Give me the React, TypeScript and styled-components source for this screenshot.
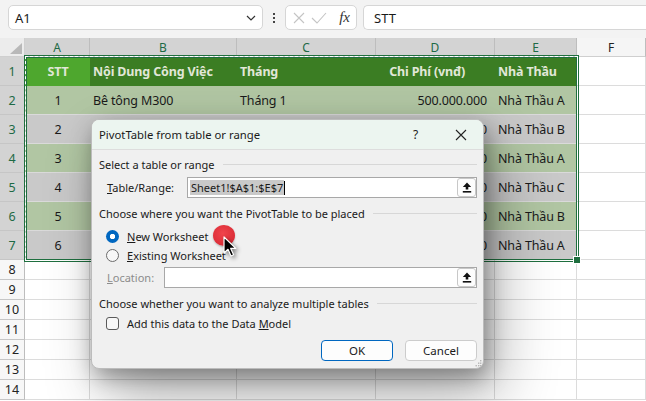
import React from "react";
import styled, { createGlobalStyle, css } from "styled-components";

const GlobalStyle = createGlobalStyle`
  html, body {
    margin: 0;
    padding: 0;
    background: #ffffff;
  }
  body {
    font-family: "Noto Sans", "Open Sans", sans-serif;
    color: #1a1a1a;
  }
`;

type Tone = "head" | "headActive" | "green" | "gray";

interface RowData {
  stt: number;
  content: string;
  month: string;
  cost: string;
  contractor: string;
}

// rows 3-7 sit under the dialog, only the edge of the cost column peeks out
const rows: RowData[] = [
  { stt: 1, content: "Bê tông M300", month: "Tháng 1", cost: "500.000.000", contractor: "Nhà Thầu A" },
  { stt: 2, content: "", month: "", cost: "320.000.000", contractor: "Nhà Thầu B" },
  { stt: 3, content: "", month: "", cost: "150.000.000", contractor: "Nhà Thầu A" },
  { stt: 4, content: "", month: "", cost: "80.000.000", contractor: "Nhà Thầu C" },
  { stt: 5, content: "", month: "", cost: "120.000.000", contractor: "Nhà Thầu B" },
  { stt: 6, content: "", month: "", cost: "90.000.000", contractor: "Nhà Thầu A" },
];

const columns = ["A", "B", "C", "D", "E", "F"];
const emptyRows = [8, 9, 10, 11, 12, 13, 14];

const UploadIcon = () => (
  <svg width="10" height="11" viewBox="0 0 10 11">
    <path d="M5 0.5 L9.2 5 L6.3 5 L6.3 7.6 L3.7 7.6 L3.7 5 L0.8 5 Z" fill="#111" />
    <rect x="0.8" y="9" width="8.4" height="1.6" fill="#111" />
  </svg>
);

const App: React.FC = () => {
  return (
    <>
      <GlobalStyle />
      <Page>
        <FormulaBar>
          <NameBox>
            <span>A1</span>
            <svg width="10" height="6" viewBox="0 0 10 6">
              <path d="M1 1 L5 5 L9 1" fill="none" stroke="#333" strokeWidth="1.2" />
            </svg>
          </NameBox>
          <Dots>
            <i />
            <i />
            <i />
          </Dots>
          <FnBox>
            <svg width="12" height="12" viewBox="0 0 12 12">
              <path d="M1 1 L11 11 M11 1 L1 11" stroke="#c4c4c4" strokeWidth="1.1" />
            </svg>
            <svg width="16" height="12" viewBox="0 0 16 12">
              <path d="M1 6 L6 11 L15 1" fill="none" stroke="#c4c4c4" strokeWidth="1.1" />
            </svg>
            <FxText>fx</FxText>
          </FnBox>
          <FormulaInput>STT</FormulaInput>
        </FormulaBar>

        <SheetWrap>
          <Sheet>
            <Corner>
              <svg width="12" height="11" viewBox="0 0 12 11">
                <path d="M12 0 L12 11 L0 11 Z" fill="#b8b8b8" />
              </svg>
            </Corner>
            {columns.map((c) => (
              <ColHeader key={c} $selected={c !== "F"}>
                {c}
              </ColHeader>
            ))}

            <RowHeader $selected>1</RowHeader>
            <Cell $tone="headActive" $align="center" $bold>
              STT
            </Cell>
            <Cell $tone="head" $bold>
              Nội Dung Công Việc
            </Cell>
            <Cell $tone="head" $bold>
              Tháng
            </Cell>
            <Cell $tone="head" $bold $align="right" $padRight={30}>
              Chi Phí (vnđ)
            </Cell>
            <Cell $tone="head" $bold>
              Nhà Thầu
            </Cell>
            <Blank />

            {rows.map((r, i) => {
              const tone: Tone = i % 2 === 0 ? "green" : "gray";
              return (
                <React.Fragment key={r.stt}>
                  <RowHeader $selected>{i + 2}</RowHeader>
                  <Cell $tone={tone} $align="center">
                    {r.stt}
                  </Cell>
                  <Cell $tone={tone}>{r.content}</Cell>
                  <Cell $tone={tone}>{r.month}</Cell>
                  <Cell $tone={tone} $align="right" $padRight={8}>
                    {r.cost}
                  </Cell>
                  <Cell $tone={tone}>{r.contractor}</Cell>
                  <Blank />
                </React.Fragment>
              );
            })}

            {emptyRows.map((n) => (
              <React.Fragment key={n}>
                <RowHeader>{n}</RowHeader>
                {columns.map((c) => (
                  <Blank key={c} />
                ))}
              </React.Fragment>
            ))}
          </Sheet>

          <CopyMarquee>
            <Handle />
          </CopyMarquee>
        </SheetWrap>

        <Dialog>
          <TitleBar>
            <Title>PivotTable from table or range</Title>
            <TitleButton>?</TitleButton>
            <TitleButton>
              <svg width="12" height="12" viewBox="0 0 12 12">
                <path d="M1 1 L11 11 M11 1 L1 11" stroke="#222" strokeWidth="1.1" />
              </svg>
            </TitleButton>
          </TitleBar>

          <DialogBody>
            <GroupLabel>Select a table or range</GroupLabel>
            <FieldRow>
              <FieldLabel $width={80}>
                <u>T</u>able/Range:
              </FieldLabel>
              <TextBox>
                <Selected>Sheet1!$A$1:$E$7</Selected>
                <Caret />
                <PickButton>
                  <UploadIcon />
                </PickButton>
              </TextBox>
            </FieldRow>

            <GroupLabel $top={6}>Choose where you want the PivotTable to be placed</GroupLabel>
            <OptionRow $top={5}>
              <Radio $checked />
              <span>
                <u>N</u>ew Worksheet
              </span>
            </OptionRow>
            <OptionRow>
              <Radio />
              <span>
                <u>E</u>xisting Worksheet
              </span>
            </OptionRow>
            <FieldRow $top={2}>
              <FieldLabel $width={57} $disabled>
                <u>L</u>ocation:
              </FieldLabel>
              <TextBox>
                <PickButton>
                  <UploadIcon />
                </PickButton>
              </TextBox>
            </FieldRow>

            <GroupLabel $top={6}>Choose whether you want to analyze multiple tables</GroupLabel>
            <OptionRow $top={1} $height={20}>
              <CheckBox />
              <span>
                Add this data to the Data <u>M</u>odel
              </span>
            </OptionRow>

            <ButtonRow>
              <DialogButton $primary>OK</DialogButton>
              <DialogButton>Cancel</DialogButton>
            </ButtonRow>
          </DialogBody>
          <Grip>
            <svg width="7" height="7" viewBox="0 0 7 7">
              <g fill="#b5b5b5">
                <rect x="5" y="0" width="1.4" height="1.4" />
                <rect x="3" y="2.5" width="1.4" height="1.4" />
                <rect x="5" y="2.5" width="1.4" height="1.4" />
                <rect x="0.5" y="5" width="1.4" height="1.4" />
                <rect x="3" y="5" width="1.4" height="1.4" />
                <rect x="5" y="5" width="1.4" height="1.4" />
              </g>
            </svg>
          </Grip>
        </Dialog>

        <ClickDot />
        <Pointer>
          <svg width="14" height="22" viewBox="0 0 14 22">
            <path
              d="M1 1 L1 17 L5 13.3 L8 20 L10.6 18.8 L7.7 12.4 L12.8 12.4 Z"
              fill="#000"
              stroke="#fff"
              strokeWidth="1.2"
              strokeLinejoin="round"
            />
          </svg>
        </Pointer>
      </Page>
    </>
  );
};

export default App;

const Page = styled.div`
  position: relative;
  width: 646px;
  height: 401px;
  overflow: hidden;
  background: #fff;
`;

const FormulaBar = styled.div`
  display: flex;
  align-items: flex-start;
  height: 38px;
  padding: 5px 0 0 8px;
  box-sizing: border-box;
  background: #f3f3f3;
`;

const boxBase = css`
  height: 25px;
  box-sizing: border-box;
  background: #fff;
  border: 1px solid #d6d6d6;
  border-radius: 5px;
  display: flex;
  align-items: center;
`;

const NameBox = styled.div`
  ${boxBase};
  width: 255px;
  padding: 0 6px 0 6px;
  justify-content: space-between;
  font-size: 13px;
`;

const Dots = styled.div`
  width: 22px;
  height: 25px;
  display: flex;
  flex-direction: column;
  align-items: center;
  justify-content: center;
  gap: 2px;

  i {
    width: 2px;
    height: 2px;
    background: #444;
  }
`;

const FnBox = styled.div`
  ${boxBase};
  width: 72px;
  padding: 0 6px 0 7px;
  gap: 6px;
`;

const FxText = styled.span`
  margin-left: auto;
  font-family: "Liberation Serif", "DejaVu Serif", serif;
  font-style: italic;
  font-size: 15px;
  color: #333;
`;

const FormulaInput = styled.div`
  ${boxBase};
  flex: 1;
  margin-left: 6px;
  border-right: none;
  border-radius: 5px 0 0 5px;
  padding-left: 10px;
  font-size: 13px;
`;

const SheetWrap = styled.div`
  position: relative;
`;

const Sheet = styled.div`
  display: grid;
  grid-template-columns: 25px 65px 147px 139px 119px 82px 1fr;
  grid-template-rows: 19px repeat(7, 29px) repeat(7, 20px);
`;

const Corner = styled.div`
  background: #ececec;
  border-right: 1px solid #cfcfcf;
  border-bottom: 1px solid #cfcfcf;
  box-sizing: border-box;
  display: flex;
  align-items: flex-end;
  justify-content: flex-end;
  padding: 0 2px 2px 0;
`;

const ColHeader = styled.div<{ $selected?: boolean }>`
  box-sizing: border-box;
  display: flex;
  align-items: center;
  justify-content: center;
  font-size: 12px;
  background: ${(p) => (p.$selected ? "#d3d3d3" : "#f5f5f5")};
  color: ${(p) => (p.$selected ? "#1d6a45" : "#222")};
  border-right: 1px solid #bdbdbd;
  border-bottom: 1px solid ${(p) => (p.$selected ? "#d3d3d3" : "#cfcfcf")};
`;

const RowHeader = styled.div<{ $selected?: boolean }>`
  box-sizing: border-box;
  display: flex;
  align-items: center;
  justify-content: center;
  font-size: 12.5px;
  background: ${(p) => (p.$selected ? "#d3d3d3" : "#f7f7f7")};
  color: ${(p) => (p.$selected ? "#1d6a45" : "#222")};
  border-right: 1px solid #bdbdbd;
  border-bottom: 1px solid #c6c6c6;
`;

const toneColors: Record<Tone, string> = {
  head: "#3b7d23",
  headActive: "#4ea72e",
  green: "#b1c6a3",
  gray: "#c9c9c9",
};

const Cell = styled.div<{
  $tone: Tone;
  $align?: "left" | "center" | "right";
  $bold?: boolean;
  $padRight?: number;
}>`
  box-sizing: border-box;
  display: flex;
  align-items: center;
  justify-content: ${(p) =>
    p.$align === "center" ? "center" : p.$align === "right" ? "flex-end" : "flex-start"};
  padding: 0 ${(p) => p.$padRight ?? 2}px 0 3px;
  white-space: nowrap;
  overflow: hidden;
  font-size: 12.5px;
  letter-spacing: -0.15px;
  font-weight: ${(p) => (p.$bold ? 700 : 400)};
  background: ${(p) => toneColors[p.$tone]};
  color: ${(p) => (p.$tone === "head" || p.$tone === "headActive" ? "#e1e7d8" : "#1a1a1a")};
  border-bottom: 1px solid
    ${(p) => (p.$tone === "head" || p.$tone === "headActive" ? "transparent" : "#dadada")};
`;

const Blank = styled.div`
  box-sizing: border-box;
  border-right: 1px solid #dcdcdc;
  border-bottom: 1px solid #dcdcdc;
`;

const CopyMarquee = styled.div`
  position: absolute;
  left: 25px;
  top: 18px;
  width: 553px;
  height: 205px;
  box-sizing: border-box;
  border: 1px dashed #ffffff;
  box-shadow: 0 0 0 1px #1f6f3f, inset 0 0 0 1px #1f6f3f;
  pointer-events: none;
`;

const Handle = styled.div`
  position: absolute;
  right: -4px;
  bottom: -4px;
  width: 6px;
  height: 6px;
  background: #1f6f3f;
  border: 1px solid #fff;
`;

const Dialog = styled.div`
  position: absolute;
  left: 91px;
  top: 119px;
  width: 393px;
  height: 250px;
  box-sizing: border-box;
  background: #f0f0f0;
  border: 1px solid #bcbcbc;
  border-radius: 8px;
  overflow: hidden;
  box-shadow: 3px 8px 22px rgba(0, 0, 0, 0.35), 14px 28px 60px rgba(0, 0, 0, 0.3);
  font-size: 11px;
  color: #1a1a1a;
`;

const TitleBar = styled.div`
  height: 29px;
  display: flex;
  align-items: center;
  padding: 0 0 0 7px;
  background: #ecf5f0;
  border-bottom: 1px solid #dddddd;
`;

const Title = styled.div`
  flex: 1;
  font-size: 11.3px;
`;

const TitleButton = styled.div`
  width: 45px;
  height: 29px;
  display: flex;
  align-items: center;
  justify-content: center;
  font-size: 12px;
`;

const DialogBody = styled.div`
  display: flex;
  flex-direction: column;
  padding: 5px 6px 0 7px;
`;

const GroupLabel = styled.div<{ $top?: number }>`
  display: flex;
  align-items: center;
  gap: 8px;
  height: 18px;
  margin-top: ${(p) => p.$top ?? 0}px;
  white-space: nowrap;

  &::after {
    content: "";
    flex: 1;
    height: 1px;
    background: #d7d7d7;
  }
`;

const FieldRow = styled.div<{ $top?: number }>`
  display: flex;
  align-items: center;
  height: 21px;
  margin-top: ${(p) => p.$top ?? 4}px;
  padding-left: 8px;
`;

const FieldLabel = styled.div<{ $width: number; $disabled?: boolean }>`
  width: ${(p) => p.$width}px;
  flex-shrink: 0;
  color: ${(p) => (p.$disabled ? "#8c8c8c" : "#1a1a1a")};
`;

const TextBox = styled.div`
  flex: 1;
  height: 21px;
  box-sizing: border-box;
  display: flex;
  align-items: center;
  background: #fff;
  border: 1px solid #a8a8a8;
  padding-left: 2px;
`;

const Selected = styled.span`
  background: #c9c9c9;
  color: #1a1a1a;
  padding: 0 1px;
  line-height: 15px;
`;

const Caret = styled.span`
  width: 1px;
  height: 14px;
  background: #000;
`;

const PickButton = styled.div`
  margin-left: auto;
  width: 19px;
  height: 19px;
  box-sizing: border-box;
  border: 1px solid #c8c8c8;
  border-radius: 3px;
  background: #fdfdfd;
  display: flex;
  align-items: center;
  justify-content: center;
`;

const OptionRow = styled.div<{ $top?: number; $height?: number }>`
  display: flex;
  align-items: center;
  gap: 8px;
  height: ${(p) => p.$height ?? 19}px;
  margin-top: ${(p) => p.$top ?? 0}px;
  padding-left: 7px;
`;

const Radio = styled.span<{ $checked?: boolean }>`
  width: 13px;
  height: 13px;
  box-sizing: border-box;
  border-radius: 50%;
  flex-shrink: 0;
  ${(p) =>
    p.$checked
      ? css`
          background: radial-gradient(circle, #fff 0 2.4px, #0067c0 3px);
        `
      : css`
          background: #f7f7f7;
          border: 1px solid #6b6b6b;
        `}
`;

const CheckBox = styled.span`
  width: 13px;
  height: 13px;
  box-sizing: border-box;
  border: 1px solid #5a5a5a;
  border-radius: 3px;
  background: #f7f7f7;
  flex-shrink: 0;
`;

const ButtonRow = styled.div`
  display: flex;
  justify-content: flex-end;
  gap: 12px;
  margin-top: 7px;
  padding-right: 0;
`;

const DialogButton = styled.div<{ $primary?: boolean }>`
  width: 72px;
  height: 21px;
  box-sizing: border-box;
  display: flex;
  align-items: center;
  justify-content: center;
  background: #fdfdfd;
  border: 1px solid ${(p) => (p.$primary ? "#0067c0" : "#cccccc")};
  border-radius: 4px;
  font-size: 11.5px;
`;

const Grip = styled.div`
  position: absolute;
  right: 1px;
  bottom: 1px;
  display: flex;
`;

const ClickDot = styled.div`
  position: absolute;
  left: 213px;
  top: 225px;
  width: 22px;
  height: 21px;
  border-radius: 50%;
  background: radial-gradient(circle at 45% 40%, #f0444c, #dc2e38 70%, #c92530);
  box-shadow: 0 1px 2px rgba(0, 0, 0, 0.25);
`;

const Pointer = styled.div`
  position: absolute;
  left: 223px;
  top: 236px;
  filter: drop-shadow(2px 2px 2px rgba(0, 0, 0, 0.45));
  display: flex;
`;
